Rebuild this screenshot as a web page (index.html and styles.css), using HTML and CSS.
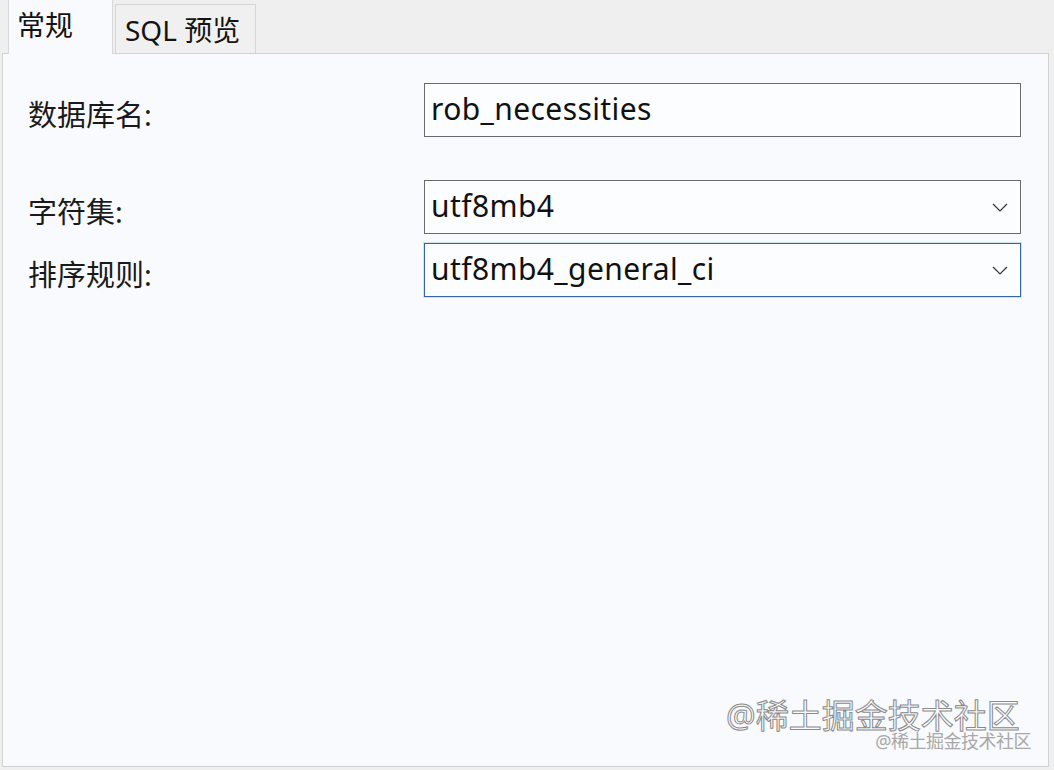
FILE: index.html
```html
<!DOCTYPE html>
<html lang="zh-CN">
<head>
<meta charset="utf-8">
<title>新建数据库</title>
<link rel="stylesheet" href="styles.css">
</head>
<body>
<div class="window">
  <div class="tabs">
    <div class="tab tab-active">常规</div>
    <div class="tab tab-inactive">SQL 预览</div>
  </div>
  <div class="panel">
    <div class="row row-name">
      <div class="label">数据库名:</div>
      <div class="field">rob_necessities</div>
    </div>
    <div class="row row-charset">
      <div class="label">字符集:</div>
      <div class="field select">
        <span>utf8mb4</span>
        <svg class="chev" width="16" height="9" viewBox="0 0 16 9"><path d="M1 1 L8 8 L15 1" fill="none" stroke="#333" stroke-width="1.2"/></svg>
      </div>
    </div>
    <div class="row row-collation">
      <div class="label">排序规则:</div>
      <div class="field select focused">
        <span>utf8mb4_general_ci</span>
        <svg class="chev" width="16" height="9" viewBox="0 0 16 9"><path d="M1 1 L8 8 L15 1" fill="none" stroke="#333" stroke-width="1.2"/></svg>
      </div>
    </div>
    <div class="watermark">
      <span class="wm-big">@稀土掘金技术社区</span>
      <span class="wm-small">@稀土掘金技术社区</span>
    </div>
  </div>
</div>
</body>
</html>
```
FILE: styles.css
```css
html, body {
  margin: 0;
  padding: 0;
  background: #efeff0;
}
body {
  width: 1054px;
  height: 770px;
  overflow: hidden;
  font-family: "Noto Sans", "Noto Sans CJK SC", sans-serif;
  color: #141414;
}
.window {
  display: flex;
  flex-direction: column;
  height: 770px;
  padding: 0 5px 3px 2px;
  box-sizing: border-box;
}
.tabs {
  display: flex;
  align-items: flex-end;
  height: 53px;
  padding-left: 6px;
  gap: 2px;
  position: relative;
  z-index: 1;
}
.tab {
  font-family: "Noto Sans", "Noto Sans CJK SC", sans-serif;
  box-sizing: border-box;
  white-space: nowrap;
}
.tab-active {
  width: 105px;
  height: 55px;
  margin-bottom: -1px;
  background: #f9fafd;
  border: 1px solid #d9d9d9;
  border-bottom: none;
  border-top: none;
  font-size: 28px;
  padding: 11px 0 0 8px;
  line-height: 30px;
}
.tab-inactive {
  width: 141px;
  height: 49px;
  background: #f0f0f0;
  border: 1px solid #d6d6d6;
  border-bottom: none;
  font-size: 28px;
  padding: 10px 0 0 9px;
  line-height: 30px;
}
.panel {
  flex: 1;
  position: relative;
  background: #f9fafd;
  border: 1px solid #d2d2d2;
  padding: 29px 26px 0 25px;
}
.row {
  display: flex;
  align-items: center;
}
.row-charset { margin-top: 43px; }
.row-collation { margin-top: 9px; }
.label {
  width: 396px;
  font-family: "Noto Sans", "Noto Sans CJK SC", sans-serif;
  font-size: 29px;
  color: #1a1a1a;
  padding-top: 6px;
}
.field {
  width: 597px;
  height: 54px;
  box-sizing: border-box;
  border: 1px solid #6a6a6a;
  background: #fcfdff;
  font-size: 30px;
  letter-spacing: 0.4px;
  padding: 0 0 4px 6px;
  display: flex;
  align-items: center;
  color: #111;
}
.select {
  justify-content: space-between;
  padding-right: 12px;
}
.focused {
  border: 1.5px solid #3465a8;
  box-shadow: 0 0 0 1px #cfe3f5;
}
.chev {
  margin-top: 4px;
}
.watermark {
  position: absolute;
  right: 17px;
  bottom: 14px;
  width: 305px;
  height: 56px;
  font-family: "Noto Sans", "Noto Sans CJK SC", sans-serif;
}
.wm-big {
  position: absolute;
  left: 0;
  top: 0;
  font-size: 33px;
  line-height: 40px;
  color: rgba(255, 255, 255, 0.6);
  -webkit-text-stroke: 1px #8a8a8a;
  letter-spacing: 0;
  white-space: nowrap;
}
.wm-small {
  position: absolute;
  right: 0;
  bottom: 0;
  font-size: 18px;
  line-height: 22px;
  color: #a8a8a8;
  letter-spacing: -0.5px;
  white-space: nowrap;
}
```
